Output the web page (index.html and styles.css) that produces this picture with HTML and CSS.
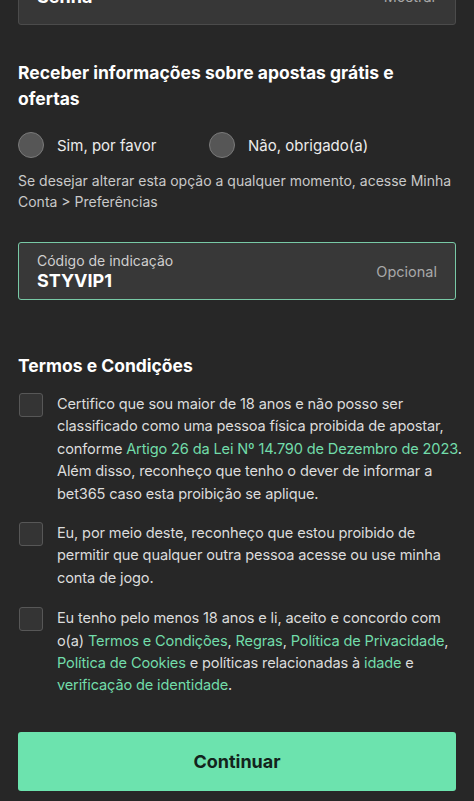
FILE: index.html
```html
<!DOCTYPE html>
<html lang="pt-BR">
<head>
<meta charset="utf-8">
<link rel="stylesheet" href="styles.css">
</head>
<body>
<main class="page">
  <div class="field field-top">
    <span class="field-value">Senha</span>
    <span class="field-hint field-hint-dim">Mostrar</span>
  </div>

  <h2 class="heading heading-offers">Receber informações sobre apostas grátis e ofertas</h2>

  <div class="radios">
    <label class="radio"><span class="radio-dot"></span><span>Sim, por favor</span></label>
    <label class="radio"><span class="radio-dot"></span><span>Não, obrigado(a)</span></label>
  </div>

  <p class="helper">Se desejar alterar esta opção a qualquer momento, acesse Minha Conta &gt; Preferências</p>

  <div class="field field-code">
    <div class="field-main">
      <span class="field-label">Código de indicação</span>
      <span class="field-value">STYVIP1</span>
    </div>
    <span class="field-hint">Opcional</span>
  </div>

  <h2 class="heading heading-terms">Termos e Condições</h2>

  <div class="check check-1">
    <span class="box"></span>
    <p>Certifico que sou maior de 18 anos e não posso ser classificado como uma pessoa física proibida de apostar, conforme <a>Artigo 26 da Lei Nº 14.790 de Dezembro de 2023</a>. Além disso, reconheço que tenho o dever de informar a bet365 caso esta proibição se aplique.</p>
  </div>

  <div class="check check-2">
    <span class="box"></span>
    <p>Eu, por meio deste, reconheço que estou proibido de permitir que qualquer outra pessoa acesse ou use minha conta de jogo.</p>
  </div>

  <div class="check check-3">
    <span class="box"></span>
    <p>Eu tenho pelo menos 18 anos e li, aceito e concordo com o(a) <a>Termos e Condições</a>, <a>Regras</a>, <a>Política de Privacidade</a>, <a>Política de Cookies</a> e políticas relacionadas à <a>idade</a> e <a>verificação de identidade</a>.</p>
  </div>

  <button class="continue">Continuar</button>
</main>
</body>
</html>
```

FILE: styles.css
```css
* { box-sizing: border-box; }
html, body {
  margin: 0;
  padding: 0;
  background: #272727;
  height: 801px;
  overflow: hidden;
}
body {
  font-family: Inter, "Noto Sans", "Liberation Sans", sans-serif;
  color: #e6e6e6;
  -webkit-font-smoothing: antialiased;
}
.page {
  padding: 0 18px;
  display: flex;
  flex-direction: column;
}
.field {
  display: flex;
  align-items: center;
  justify-content: space-between;
  background: #373737;
  border: 1.5px solid #4b4b4b;
  border-radius: 3px;
  padding: 0 18px;
}
.field-top {
  margin-top: -35px;
  height: 60px;
  align-items: flex-start;
  padding-top: 21px;
}
.field-top .field-value { font-size: 18px; line-height: 20px; }
.field-hint-dim { color: #4a5a52; font-size: 14.5px; line-height: 20px; }
.field-code {
  margin-top: 30px;
  height: 58px;
  border-color: #78c9a6;
  background: #383838;
}
.field-main {
  display: flex;
  flex-direction: column;
  padding-top: 1px;
}
.field-label {
  font-size: 14px;
  line-height: 18px;
  color: #cfcfcf;
}
.field-value {
  font-size: 18px;
  font-weight: 700;
  line-height: 22px;
  color: #ffffff;
}
.field-hint {
  font-size: 14.5px;
  color: #a8a8a8;
}
.heading {
  margin: 0;
  font-size: 17.5px;
  font-weight: 700;
  line-height: 26px;
  color: #ffffff;
}
.heading-offers { margin-top: 35px; max-width: 410px; }
.heading-terms { margin-top: 53px; }
.radios {
  display: flex;
  margin-top: 20px;
}
.radio {
  display: flex;
  align-items: center;
  gap: 13px;
  font-size: 15px;
  color: #ececec;
  width: 191px;
}
.radio-dot {
  width: 26px;
  height: 26px;
  border-radius: 50%;
  background: #565656;
  border: 1.5px solid #7a7a7a;
  flex: none;
}
.helper {
  margin: 12px 0 0;
  font-size: 14px;
  line-height: 21px;
  color: #c9c9c9;
}
.check {
  display: flex;
  align-items: flex-start;
  gap: 14px;
  margin-right: -12px;
}
.check-1 { margin-top: 14px; }
.check-2 { margin-top: 17px; }
.check-3 { margin-top: 18px; }
.box {
  width: 24px;
  height: 24px;
  flex: none;
  margin-left: 1px;
  border: 1.5px solid #575757;
  border-radius: 3px;
  background: #343434;
}
.check p {
  margin: 0;
  font-size: 14.6px;
  letter-spacing: -0.15px;
  line-height: 22.4px;
  color: #dcdcdc;
}
.check-2 p, .check-3 p { margin-right: 8px; }
.check a {
  color: #72dcaa;
  text-decoration: none;
}
.continue {
  margin-top: 35px;
  height: 59px;
  border: none;
  border-radius: 3px;
  background: #6ce3ae;
  color: #13241c;
  font-family: inherit;
  font-size: 18px;
  font-weight: 700;
}
```
